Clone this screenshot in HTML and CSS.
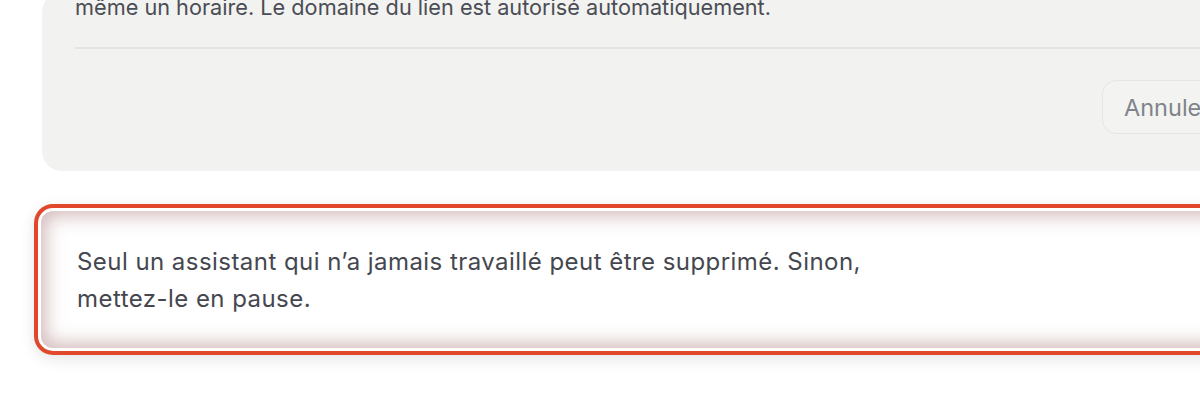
FILE: index.html
```html
<!DOCTYPE html>
<html lang="fr">
<head>
    <meta charset="UTF-8">
    <meta name="viewport" content="width=device-width, initial-scale=1.0">
    <title>Assistant</title>
    <link rel="stylesheet" href="styles.css">
</head>
<body>
    <div class="dialog">
        <p class="dialog-text">même un horaire. Le domaine du lien est autorisé automatiquement.</p>
        <div class="dialog-footer">
            <button class="btn-cancel">Annuler</button>
        </div>
    </div>

    <div class="notice">
        <p class="notice-text">Seul un assistant qui n’a jamais travaillé peut être supprimé. Sinon,<br>mettez-le en pause.</p>
    </div>
</body>
</html>
```

FILE: styles.css
```css
body {
    margin: 0;
    height: 400px;
    overflow: hidden;
    background-color: #fff;
    font-family: Inter, 'Noto Sans', sans-serif;
    color: #45474f;
}
.dialog {
    width: 1200px;
    margin-top: -8px;
    margin-left: 42px;
    padding: 0 0 37px 33px;
    background-color: #f2f2f0;
    border-radius: 20px;
}
.dialog-text {
    margin: 0;
    font-size: 21.7px;
    line-height: 30px;
    color: #4a4d55;
}
.dialog-footer {
    margin-top: 25px;
    padding-top: 31px;
    border-top: 2px solid #e5e5e1;
}
.btn-cancel {
    margin-left: 1027px;
    height: 54px;
    padding: 0 21px;
    font-family: inherit;
    font-size: 23.5px;
    color: #80838a;
    background-color: #f3f3f1;
    border: 1.5px solid #e6e6e3;
    border-radius: 14px;
}
.notice {
    margin: 40px 0 0 41px;
    width: 1200px;
    padding: 32px 0 31px 36px;
    background-color: #fff;
    border-radius: 12px;
    box-shadow:
        inset 0 0 18px 5px rgba(170, 120, 120, 0.5),
        0 0 0 3px #fff,
        0 0 0 7px #e0472b,
        0 4px 16px 6px rgba(0, 0, 0, 0.12);
}
.notice-text {
    margin: 0;
    font-size: 24px;
    line-height: 37px;
    letter-spacing: 0.45px;
    color: #45474f;
}
```
